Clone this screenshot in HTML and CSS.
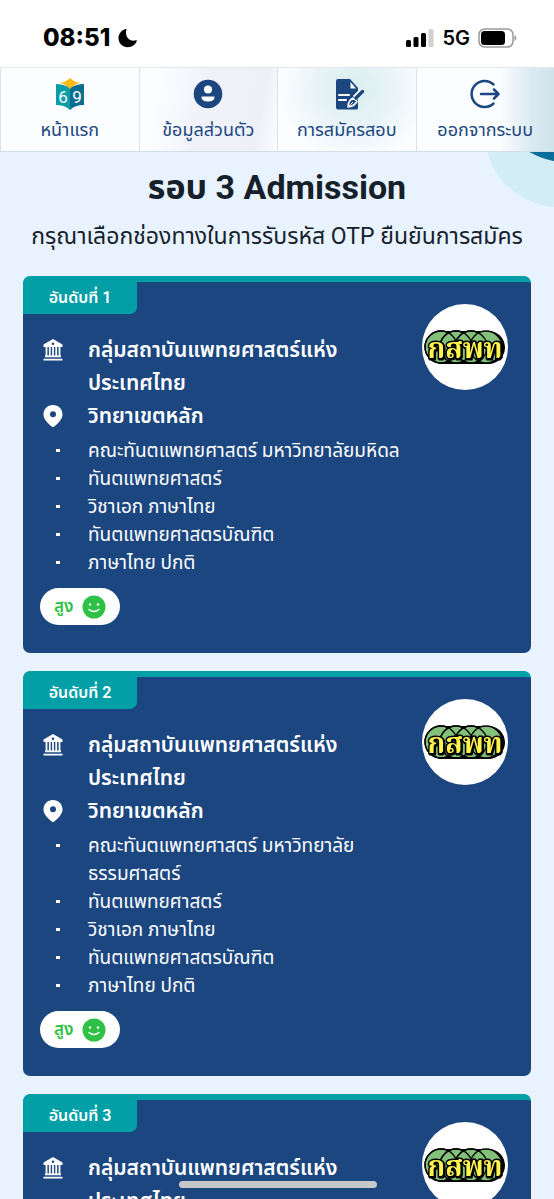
FILE: index.html
```html
<!DOCTYPE html>
<html lang="th">
<head>
    <meta charset="UTF-8">
    <meta name="viewport" content="width=device-width, initial-scale=1.0">
    <title>รอบ 3 Admission</title>
    <link rel="stylesheet" href="styles.css">
</head>
<body>
    <!-- shared icons -->
    <svg class="sprite" aria-hidden="true">
        <symbol id="icon-bank" viewBox="0 0 20 22">
            <path fill="currentColor" fill-rule="evenodd" d="M10 0 19.500 5.500V8H.5V5.500zM10 3.500a1.300 1.300 0 1 0 0 2.600 1.300 1.300 0 0 0 0-2.600z"/>
            <path fill="none" stroke="currentColor" stroke-width="1.800" d="M3.500 8v9.500M6.800 8v9.500M10 8v9.500M13.200 8v9.500M16.500 8v9.500"/>
            <path fill="currentColor" d="M2 16.500h16V18.300H2zM.5 19.700h19v1.800H.5z"/>
        </symbol>
        <symbol id="icon-pin" viewBox="0 0 20 22">
            <path fill="currentColor" fill-rule="evenodd" d="M10 0C4.500 0 .5 4.200.5 9.300c0 4 2.500 7.200 7.800 12 1 .9 2.400.9 3.400 0 5.300-4.800 7.800-8 7.800-12C19.500 4.200 15.500 0 10 0zm0 6.200a3 3 0 1 1 0 6 3 3 0 0 1 0-6z"/>
        </symbol>
        <symbol id="icon-smile" viewBox="0 0 24 24">
            <circle cx="12" cy="12" r="11.500" fill="#2fc145"/>
            <circle cx="8" cy="9.500" r="1.200" fill="#fff"/>
            <circle cx="16" cy="9.500" r="1.200" fill="#fff"/>
            <path d="M7 14.500q5 4 10 0" fill="none" stroke="#fff" stroke-width="1.500" stroke-linecap="round"/>
        </symbol>
        <symbol id="logo-rings" viewBox="0 0 86 86">
            <circle cx="43" cy="43" r="43" fill="#fff"/>
            <rect x="4" y="27" width="79" height="33" rx="16.500" fill="#000"/>
            <g fill="#83c17a" stroke="#000" stroke-width="1.300">
                <circle cx="19" cy="43" r="16"/>
                <circle cx="34" cy="43" r="16"/>
                <circle cx="49" cy="43" r="16"/>
                <circle cx="64" cy="43" r="16"/>
            </g>
            <g fill="none" stroke="#000" stroke-width="1.300">
                <circle cx="19" cy="43" r="16"/>
                <circle cx="34" cy="43" r="16"/>
                <circle cx="49" cy="43" r="16"/>
            </g>
        </symbol>
    </svg>

    <div class="screen">
        <div class="status-bar">
            <div class="status-left">
                <span class="time">08:51</span>
                <svg width="20" height="20" viewBox="0 0 20 20"><path d="M7.500 1C2.800 2.600.5 6.200.5 10c0 5.200 4 9.200 9.300 9.200 4 0 7.500-2.300 9-6.200.2-.6-.2-.9-.8-.7C12.500 14.300 6.500 9.500 8.300 1.800c.3-.7-.1-1-.8-.8z"/></svg>
            </div>
            <div class="status-right">
                <svg width="28" height="18" viewBox="0 0 28 18">
                    <rect x="0" y="11" width="5" height="7" rx="1.500"/>
                    <rect x="7.500" y="8" width="5" height="10" rx="1.500"/>
                    <rect x="15" y="4" width="5" height="14" rx="1.500"/>
                    <rect x="22.500" y="0" width="5" height="18" rx="1.500" fill="#d0d0d0"/>
                </svg>
                <span class="network">5G</span>
                <svg width="39" height="20" viewBox="0 0 39 20">
                    <rect x="1" y="1" width="34" height="18" rx="5.500" fill="none" stroke="#999" stroke-width="1.500"/>
                    <rect x="3" y="3" width="24" height="14" rx="3.500"/>
                    <path d="M36.500 7q4 3 0 6z" fill="#999"/>
                </svg>
            </div>
        </div>

        <nav class="menu">
            <a class="menu-item" href="#">
                <svg width="36" height="36" viewBox="0 0 36 36">
                    <path fill="#0a9da6" d="M4 8q8 0 14 4v22q-5-5-14-5z"/>
                    <path fill="#0b6d8f" d="M32 8q-8 0-14 4v22q5-5 14-5z"/>
                    <path fill="#fdb913" d="M8 7q6-1 10-5 4 4 10 5-6 1-10 6-4-5-10-6z"/>
                    <text class="book-number" x="11" y="27" text-anchor="middle">6</text>
                    <text class="book-number" x="25" y="27" text-anchor="middle">9</text>
                </svg>
                <span>หน้าแรก</span>
            </a>
            <a class="menu-item menu-profile" href="#">
                <svg width="36" height="36" viewBox="0 0 36 36">
                    <circle cx="18" cy="18" r="14.300" fill="#1b467f"/>
                    <circle cx="18" cy="13.500" r="4" fill="#fff"/>
                    <path d="M11.500 20.500h13q.3 5-6.500 5t-6.500-5z" fill="#fff"/>
                </svg>
                <span>ข้อมูลส่วนตัว</span>
            </a>
            <a class="menu-item menu-apply" href="#">
                <svg width="36" height="36" viewBox="0 0 36 36">
                    <path fill="#1b467f" d="M9 3h12l8 9v20q0 1.500-1.500 1.500H9Q7 33.500 7 31.500V5q0-2 2-2z"/>
                    <path fill="#fff" d="M21.500 6v6.500H27z"/>
                    <path fill="none" stroke="#fff" stroke-width="2" stroke-linecap="round" d="M10 19h10M10 24h7"/>
                    <path fill="#1b467f" stroke="#fff" stroke-width="1.600" stroke-linejoin="round" d="M19 31q0-6 5-9l4 3.500q-3 5-9 5.500z"/>
                    <path fill="none" stroke="#fff" stroke-width="6" d="M26 22l7-7"/>
                    <path fill="none" stroke="#1b467f" stroke-width="3.500" stroke-linecap="round" d="M27 22l6.500-6.500"/>
                    <path fill="none" stroke="#fff" stroke-width="1" d="M20 30l4-4"/>
                </svg>
                <span>การสมัครสอบ</span>
            </a>
            <a class="menu-item menu-logout" href="#">
                <svg width="36" height="36" viewBox="0 0 36 36">
                    <g fill="none" stroke="#1b467f" stroke-width="2.500" stroke-linecap="round" stroke-linejoin="round">
                        <path d="M26.500 8.500a13 13 0 1 0 0 19"/>
                        <path d="M14 18h17M27 13.500l4.500 4.500-4.500 4.500"/>
                    </g>
                </svg>
                <span>ออกจากระบบ</span>
            </a>
        </nav>

        <main class="content">
            <svg class="bubble" width="70" height="60" viewBox="0 0 70 60">
                <ellipse cx="81" cy="-14" rx="79" ry="70" fill="#d2edf5"/>
                <ellipse cx="90" cy="-26" rx="62" ry="37" fill="#0b6d9a"/>
            </svg>

            <h1>รอบ 3 Admission</h1>
            <p class="subtitle">กรุณาเลือกช่องทางในการรับรหัส OTP ยืนยันการสมัคร</p>

            <section class="card">
                <div class="rank">อันดับที่ 1</div>
                <div class="card-body">
                    <div class="info">
                        <svg class="icon"><use href="#icon-bank"/></svg>
                        <h2>กลุ่มสถาบันแพทยศาสตร์แห่ง<br>ประเทศไทย</h2>
                        <svg class="icon"><use href="#icon-pin"/></svg>
                        <h2>วิทยาเขตหลัก</h2>
                    </div>
                    <svg class="logo" viewBox="0 0 86 86">
                        <use href="#logo-rings"/>
                        <text class="logo-text" x="43" y="54" text-anchor="middle">กสพท</text>
                    </svg>
                </div>
                <ul class="details">
                    <li>คณะทันตแพทยศาสตร์ มหาวิทยาลัยมหิดล</li>
                    <li>ทันตแพทยศาสตร์</li>
                    <li>วิชาเอก ภาษาไทย</li>
                    <li>ทันตแพทยศาสตรบัณฑิต</li>
                    <li>ภาษาไทย ปกติ</li>
                </ul>
                <div class="chance">สูง <svg width="24" height="24"><use href="#icon-smile"/></svg></div>
            </section>

            <section class="card">
                <div class="rank">อันดับที่ 2</div>
                <div class="card-body">
                    <div class="info">
                        <svg class="icon"><use href="#icon-bank"/></svg>
                        <h2>กลุ่มสถาบันแพทยศาสตร์แห่ง<br>ประเทศไทย</h2>
                        <svg class="icon"><use href="#icon-pin"/></svg>
                        <h2>วิทยาเขตหลัก</h2>
                    </div>
                    <svg class="logo" viewBox="0 0 86 86">
                        <use href="#logo-rings"/>
                        <text class="logo-text" x="43" y="54" text-anchor="middle">กสพท</text>
                    </svg>
                </div>
                <ul class="details">
                    <li>คณะทันตแพทยศาสตร์ มหาวิทยาลัย<br>ธรรมศาสตร์</li>
                    <li>ทันตแพทยศาสตร์</li>
                    <li>วิชาเอก ภาษาไทย</li>
                    <li>ทันตแพทยศาสตรบัณฑิต</li>
                    <li>ภาษาไทย ปกติ</li>
                </ul>
                <div class="chance">สูง <svg width="24" height="24"><use href="#icon-smile"/></svg></div>
            </section>

            <section class="card">
                <div class="rank">อันดับที่ 3</div>
                <div class="card-body">
                    <div class="info">
                        <svg class="icon"><use href="#icon-bank"/></svg>
                        <h2>กลุ่มสถาบันแพทยศาสตร์แห่ง<br>ประเทศไทย</h2>
                    </div>
                    <svg class="logo" viewBox="0 0 86 86">
                        <use href="#logo-rings"/>
                        <text class="logo-text" x="43" y="54" text-anchor="middle">กสพท</text>
                    </svg>
                </div>
            </section>
        </main>

        <div class="home-indicator"></div>
    </div>
</body>
</html>
```

FILE: styles.css
```css
* {
    box-sizing: border-box;
}
body {
    margin: 0;
    font-family: "Roboto", "Noto Sans Thai", "Noto Sans", sans-serif;
    color: #15202b;
    background-color: #e8f3ff;
}
h1, h2, p, ul {
    margin: 0;
    padding: 0;
}
.sprite {
    position: absolute;
    width: 0;
    height: 0;
}
.screen {
    display: flex;
    flex-direction: column;
    height: 100vh;
    overflow: hidden;
}

/* status bar */
.status-bar {
    display: flex;
    flex-shrink: 0;
    justify-content: space-between;
    align-items: center;
    height: 67px;
    padding: 8px 37px 0 43px;
    background-color: #fff;
    color: #000;
    font-family: "Inter", sans-serif;
}
.status-left,
.status-right {
    display: flex;
    align-items: center;
    gap: 8px;
}
.time {
    font-size: 24px;
    font-weight: 800;
}
.network {
    font-size: 20px;
    font-weight: 600;
}

/* menu */
.menu {
    display: grid;
    grid-template-columns: repeat(4, 1fr);
    flex-shrink: 0;
    height: 85px;
    background-color: #fbfdff;
    border-top: 1px solid #e4e8ee;
    border-bottom: 1px solid #d5dde6;
}
.menu-item {
    display: flex;
    flex-direction: column;
    align-items: center;
    padding-top: 8px;
    border-left: 1px solid #dde2ea;
    color: #1b467f;
    font-size: 18px;
    line-height: 36px;
    text-decoration: none;
    white-space: nowrap;
}
.menu-profile {
    background: linear-gradient(100deg, #fbfdff 15%, #eff3f9 45%, #edf1f7 85%, #fbfcff);
}
.menu-apply {
    background: radial-gradient(circle at 55% 25%, #d9eeee, #e9f4f8 40%, #fbfdff 75%);
}
.menu-logout {
    background: linear-gradient(90deg, #fbfdff 60%, #d9e9f1 85%, #cfe2ea);
}
.book-number {
    font-family: "Roboto", sans-serif;
    font-size: 17px;
    fill: #fff;
}

/* content */
.content {
    position: relative;
    display: flex;
    flex-direction: column;
    flex: 1;
    min-height: 0;
    padding: 10px 23px 0;
    overflow: hidden;
}
.bubble {
    position: absolute;
    top: 0;
    right: 0;
}
h1 {
    position: relative;
    font-size: 34px;
    line-height: 50px;
    font-weight: 700;
    text-align: center;
}
.subtitle {
    position: relative;
    margin-bottom: 14px;
    font-size: 23px;
    line-height: 50px;
    text-align: center;
    white-space: nowrap;
}

/* cards */
.card {
    flex-shrink: 0;
    margin-bottom: 18px;
    padding-bottom: 28px;
    background-color: #1b467f;
    border-top: 6px solid #02a0a6;
    border-radius: 7px;
    color: #fff;
}
.rank {
    width: 114px;
    height: 32px;
    background-color: #02a0a6;
    border-bottom-right-radius: 7px;
    font-size: 16px;
    line-height: 32px;
    font-weight: 600;
    text-align: center;
}
.card-body {
    display: flex;
    justify-content: space-between;
    padding: 0 23px 0 20px;
}
.info {
    display: grid;
    grid-template-columns: 20px 1fr;
    column-gap: 25px;
    padding-top: 20px;
}
h2 {
    font-size: 21px;
    line-height: 33px;
    font-weight: 600;
    white-space: nowrap;
}
.icon {
    width: 20px;
    height: 22px;
    margin-top: 5px;
}
.logo {
    width: 86px;
    height: 86px;
    margin-top: -10px;
}
.logo-text {
    font-family: "Noto Serif Thai", "Liberation Serif", serif;
    font-size: 28px;
    font-weight: 700;
    fill: #fff34d;
    stroke: #000;
    stroke-width: 3px;
    paint-order: stroke;
    filter: drop-shadow(1px 1px 0 #000);
}
.details {
    padding-top: 4px;
    list-style: none;
    font-size: 19px;
    line-height: 28px;
}
.details li {
    display: flex;
    padding-right: 23px;
}
.details li::before {
    content: "";
    flex-shrink: 0;
    width: 4px;
    height: 3px;
    margin: 12px 28px 0 33px;
    background-color: #fff;
}
.chance {
    display: inline-flex;
    align-items: center;
    gap: 8px;
    height: 37px;
    margin: 11px 0 0 17px;
    padding: 0 14px;
    background-color: #fff;
    border-radius: 19px;
    color: #2fc145;
    font-size: 17px;
    font-weight: 600;
}
.home-indicator {
    position: fixed;
    bottom: 11px;
    left: 50%;
    width: 198px;
    height: 7px;
    margin-left: -98px;
    background-color: #c7c7c9;
    border-radius: 4px;
}
```
